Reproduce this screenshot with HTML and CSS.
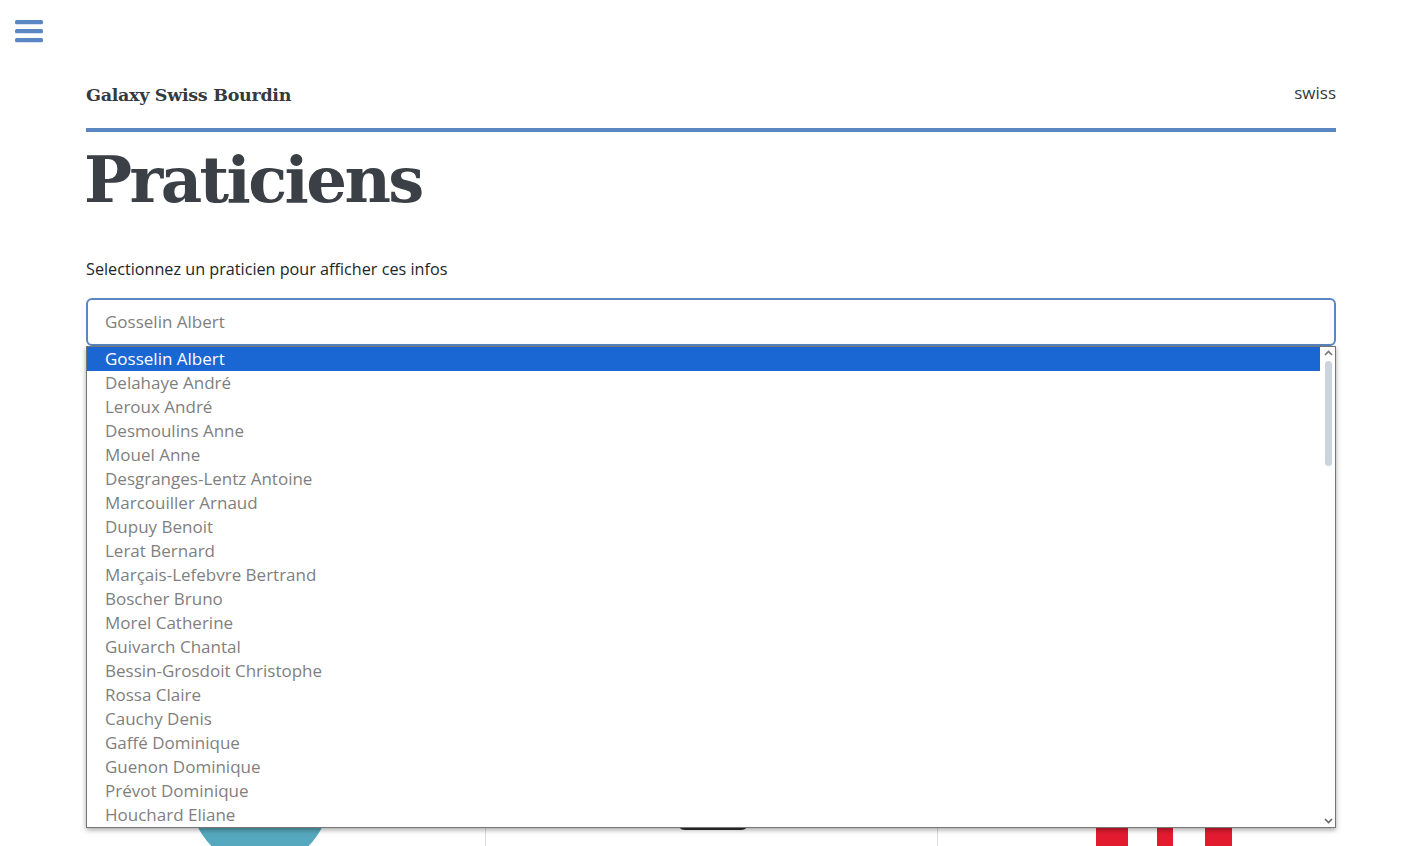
FILE: index.html
```html
<!DOCTYPE html>
<html lang="fr">
<head>
<meta charset="utf-8">
<title>Praticiens</title>
<link rel="stylesheet" href="styles.css">
</head>
<body>
<button class="burger" aria-label="menu">
  <svg width="28" height="24" viewBox="0 0 28 24"><g fill="#5a87c3"><rect x="0" y="1" width="28" height="4.3" rx="1.5"/><rect x="0" y="10" width="28" height="4.3" rx="1.5"/><rect x="0" y="19" width="28" height="4.3" rx="1.5"/></g></svg>
</button>
<div class="container">
  <header class="topbar">
    <span class="brand">Galaxy Swiss Bourdin</span>
    <span class="user">swiss</span>
  </header>
  <h1 class="title">Praticiens</h1>
  <label class="label">Selectionnez un praticien pour afficher ces infos</label>
  <div class="selectwrap">
    <div class="select">Gosselin Albert</div>
    <div class="listbox">
      <ul class="options">
        <li class="opt selected">Gosselin Albert</li>
        <li class="opt">Delahaye André</li>
        <li class="opt">Leroux André</li>
        <li class="opt">Desmoulins Anne</li>
        <li class="opt">Mouel Anne</li>
        <li class="opt">Desgranges-Lentz Antoine</li>
        <li class="opt">Marcouiller Arnaud</li>
        <li class="opt">Dupuy Benoit</li>
        <li class="opt">Lerat Bernard</li>
        <li class="opt">Marçais-Lefebvre Bertrand</li>
        <li class="opt">Boscher Bruno</li>
        <li class="opt">Morel Catherine</li>
        <li class="opt">Guivarch Chantal</li>
        <li class="opt">Bessin-Grosdoit Christophe</li>
        <li class="opt">Rossa Claire</li>
        <li class="opt">Cauchy Denis</li>
        <li class="opt">Gaffé Dominique</li>
        <li class="opt">Guenon Dominique</li>
        <li class="opt">Prévot Dominique</li>
        <li class="opt">Houchard Eliane</li>
      </ul>
      <div class="scrollbar">
        <svg class="arrow" width="9" height="6" viewBox="0 0 9 6"><path d="M1 5 L4.5 1.5 L8 5" fill="none" stroke="#777" stroke-width="1.6"/></svg>
        <div class="track"><div class="thumb"></div></div>
        <svg class="arrow" width="9" height="6" viewBox="0 0 9 6"><path d="M1 1 L4.5 4.5 L8 1" fill="none" stroke="#666" stroke-width="1.6"/></svg>
      </div>
    </div>
  </div>
  <section class="cards">
    <div class="card">
      <svg class="art" width="399" height="520" viewBox="0 0 399 520"><circle cx="174" cy="445" r="69" fill="#55a8bd"/></svg>
    </div>
    <div class="card">
      <svg class="art" width="451" height="520" viewBox="0 0 451 520"><rect x="191" y="395" width="72" height="83" rx="8" fill="#2f2f2f"/></svg>
    </div>
    <div class="card">
      <svg class="art" width="398" height="520" viewBox="0 0 398 520"><g fill="#e31b2f"><rect x="158" y="470" width="32" height="60"/><rect x="219" y="470" width="16" height="60"/><rect x="267" y="470" width="27" height="60"/></g></svg>
    </div>
  </section>
</div>
</body>
</html>
```
FILE: styles.css
```css
* { box-sizing: border-box; }
html, body { margin: 0; padding: 0; background: #fff; }
body {
  font-family: "Open Sans", "Liberation Sans", sans-serif;
  color: #343a40;
  height: 846px;
  overflow: hidden;
}
.burger {
  display: block;
  margin: 0;
  padding: 0;
  border: 0;
  background: none;
  position: absolute;
  left: 15px;
  top: 19px;
  line-height: 0;
}
.container {
  width: 1250px;
  padding-top: 80px;
  margin-left: 86px;
}
.topbar {
  display: flex;
  justify-content: space-between;
  align-items: flex-end;
  padding-bottom: 21px;
  border-bottom: 4px solid #5a87c3;
  box-sizing: content-box;
  height: 27px;
}
.brand {
  font-family: "DejaVu Serif", "Liberation Serif", serif;
  font-weight: bold;
  font-size: 17.5px;
  line-height: 24px;
  color: #343a40;
  letter-spacing: -0.3px;
}
.user {
  font-size: 17px;
  line-height: 24px;
  font-weight: 500;
  color: #343a40;
  position: relative;
  top: -2px;
}
.title {
  font-family: "DejaVu Serif", "Liberation Serif", serif;
  font-weight: bold;
  font-size: 64px;
  letter-spacing: -2.6px;
  line-height: 1;
  margin: 16px 0 0 -2px;
  color: #3b4046;
}
.label {
  display: block;
  font-size: 16.2px;
  font-weight: 500;
  color: #212529;
  margin-top: 45px;
  line-height: 24px;
}
.selectwrap {
  position: relative;
  margin-top: 17px;
}
.select {
  height: 48px;
  border: 2px solid #5a87c3;
  border-radius: 6px;
  padding: 0 17px;
  font-size: 17px;
  line-height: 44px;
  color: #808080;
}
.listbox {
  position: absolute;
  left: 0;
  right: 0;
  top: 48px;
  height: 482px;
  background: #fff;
  border: 1px solid #767676;
  box-shadow: 0 2px 5px rgba(0,0,0,0.35);
  display: flex;
  z-index: 5;
}
.options {
  list-style: none;
  margin: 0;
  padding: 0;
  flex: 1;
}
.opt {
  height: 24px;
  line-height: 24px;
  font-size: 17px;
  color: #7f7f7f;
  padding-left: 18px;
  white-space: nowrap;
}
.opt.selected {
  background: #1a66d3;
  color: #fff;
}
.scrollbar {
  width: 15px;
  display: flex;
  flex-direction: column;
  align-items: center;
  padding: 3px 0 3px;
}
.arrow { display: block; margin-left: 1px; }
.track {
  flex: 1;
  width: 100%;
  display: flex;
  justify-content: center;
  padding-top: 5px;
}
.thumb {
  width: 7px;
  height: 105px;
  border-radius: 4px;
  background: #cbd3dc;
  margin-left: 1px;
}
.cards {
  display: grid;
  grid-template-columns: 399px 452px 1fr;
  margin-top: 6px;
}
.card { height: 520px; overflow: hidden; }
.card + .card { border-left: 1px solid #dcdcdc; }
.art { display: block; }
```
